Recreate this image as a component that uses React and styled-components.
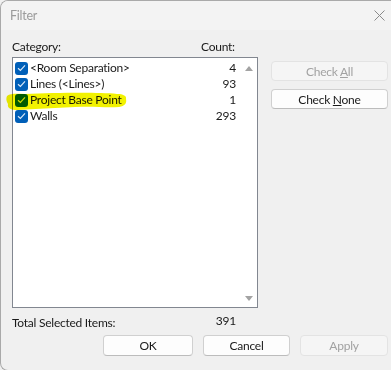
import styled, { createGlobalStyle } from 'styled-components';

const GlobalStyle = createGlobalStyle`
  body {
    margin: 0;
    background: #f0f0f0;
    font-family: Lato, "Noto Sans", sans-serif;
    font-size: 12px;
    letter-spacing: -0.25px;
    color: #1a1a1a;
  }
`;

const items = [
  { name: '<Room Separation>', count: 4 },
  { name: 'Lines (<Lines>)', count: 93 },
  { name: 'Project Base Point', count: 1 },
  { name: 'Walls', count: 293 },
];

const Window = styled.div`
  position: relative;
  width: 390px;
  height: 369px;
  background: #f0f0f0;
  border: 1px solid #a9a9a9;
  border-right: none;
  border-radius: 8px 0 0 8px;
  overflow: hidden;
`;

const TitleBar = styled.div`
  display: flex;
  align-items: center;
  justify-content: space-between;
  height: 29px;
  padding: 0 6px 0 9px;
  background: #f3f3f3;
  color: #9a9a9a;
  font-size: 12.5px;
`;

const Body = styled.div`
  padding: 0 0 0 11px;
`;

const HeaderRow = styled.div`
  display: flex;
  width: 246px;
  height: 14px;
  margin-top: 10px;
  line-height: 14px;

  span:first-child {
    width: 189px;
  }
`;

const MainRow = styled.div`
  display: flex;
  margin-top: 3px;
`;

const ListBox = styled.div`
  display: flex;
  width: 244px;
  height: 249px;
  background: #fff;
  border: 1px solid #828790;
`;

const Rows = styled.div`
  flex: 1;
  padding-top: 2px;
`;

const Row = styled.div`
  display: flex;
  align-items: center;
  height: 16px;
  padding-left: 2px;
  line-height: 16px;
`;

const Check = styled.span`
  display: inline-flex;
  align-items: center;
  justify-content: center;
  width: 13px;
  height: 13px;
  margin-right: 2px;
  border-radius: 3px;
  background: #005fb8;
`;

const Name = styled.span`
  flex: 1;
  white-space: nowrap;
`;

const Count = styled.span`
  width: 40px;
  padding-right: 4px;
  text-align: right;
`;

const ScrollBar = styled.div`
  display: flex;
  flex-direction: column;
  justify-content: space-between;
  align-items: center;
  width: 17px;
  padding: 8px 0 6px;
  box-sizing: border-box;
`;

const Arrow = styled.span`
  width: 0;
  height: 0;
  border-left: 4px solid transparent;
  border-right: 4px solid transparent;
  ${p => (p.$down ? 'border-top: 5px solid #a3a3a3;' : 'border-bottom: 5px solid #a3a3a3;')}
`;

const SideButtons = styled.div`
  display: flex;
  flex-direction: column;
  gap: 8px;
  margin: 4px 0 0 13px;
`;

const Button = styled.button`
  width: ${p => p.$w || 117}px;
  height: ${p => p.$h || 20}px;
  padding: 0;
  font: inherit;
  letter-spacing: inherit;
  color: ${p => (p.disabled ? '#a2a2a2' : '#1a1a1a')};
  background: ${p => (p.disabled ? '#f5f5f5' : '#fdfdfd')};
  border: 1px solid ${p => (p.disabled ? '#e3e3e3' : '#d0d0d0')};
  border-bottom-color: ${p => (p.disabled ? '#e3e3e3' : '#bcbcbc')};
  border-radius: 4px;
`;

const TotalRow = styled.div`
  display: flex;
  align-items: center;
  width: 224px;
  height: 20px;
  margin-top: 2px;

  span:first-child {
    flex: 1;
    padding-top: 4px;
  }
`;

const Footer = styled.div`
  display: flex;
  gap: 10px;
  margin: 5px 0 0 91px;
`;

const Highlight = styled.svg`
  position: absolute;
  left: 4px;
  top: 90px;
  mix-blend-mode: multiply;
  pointer-events: none;
`;

const CheckMark = () => (
  <svg width="9" height="8" viewBox="0 0 9 8">
    <path d="M1 4.2 L3.4 6.4 L8 1.4" fill="none" stroke="#d8e8f8" strokeWidth="1.2" />
  </svg>
);

const App = () => (
  <>
    <GlobalStyle />
    <Window>
      <TitleBar>
        <span>Filter</span>
        <svg width="11" height="11" viewBox="0 0 11 11">
          <path d="M0.5 0.5 L10.5 10.5 M10.5 0.5 L0.5 10.5" stroke="#8a8a8a" strokeWidth="1" />
        </svg>
      </TitleBar>
      <Body>
        <HeaderRow>
          <span>Category:</span>
          <span>Count:</span>
        </HeaderRow>
        <MainRow>
          <ListBox>
            <Rows>
              {items.map(it => (
                <Row key={it.name}>
                  <Check>
                    <CheckMark />
                  </Check>
                  <Name>{it.name}</Name>
                  <Count>{it.count}</Count>
                </Row>
              ))}
            </Rows>
            <ScrollBar>
              <Arrow />
              <Arrow $down />
            </ScrollBar>
          </ListBox>
          <SideButtons>
            <Button disabled>
              Check <u>A</u>ll
            </Button>
            <Button>
              Check <u>N</u>one
            </Button>
          </SideButtons>
        </MainRow>
        <TotalRow>
          <span>Total Selected Items:</span>
          <span>391</span>
        </TotalRow>
        <Footer>
          <Button $w={90} $h={21}>OK</Button>
          <Button $w={87} $h={21}>Cancel</Button>
          <Button $w={88} $h={21} disabled>
            Apply
          </Button>
        </Footer>
      </Body>
      <Highlight width="124" height="21" viewBox="0 0 124 21">
        <path
          d="M2 5 C6 2, 12 3, 20 3 C50 2, 90 1, 112 3 C118 3, 122 5, 121 8 C122 12, 120 15, 114 16 C100 17, 90 15, 70 16 C50 17, 30 18, 12 19 C6 19, 2 17, 3 13 C1 10, 1 7, 2 5 Z"
          fill="#f2f200"
        />
      </Highlight>
    </Window>
  </>
);

export default App;
